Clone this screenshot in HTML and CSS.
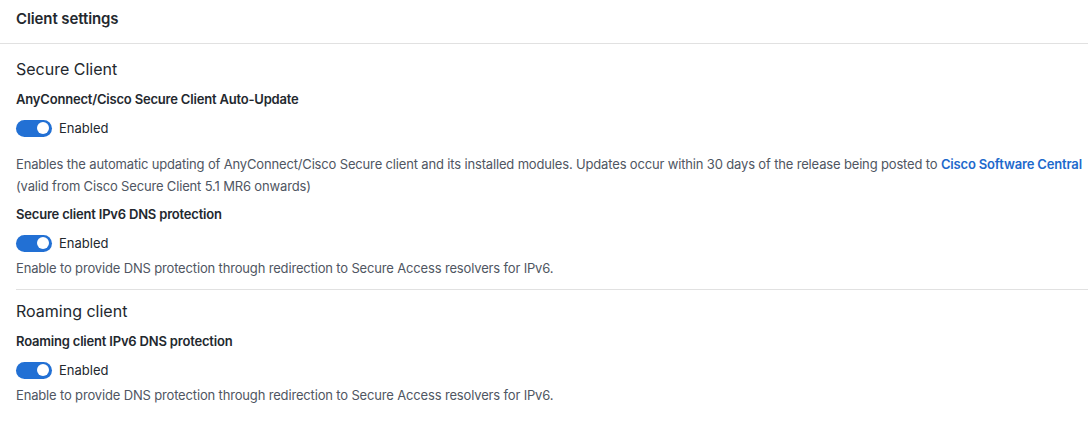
FILE: index.html
```html
<!DOCTYPE html>
<html>
<head>
<meta charset="utf-8">
<link rel="stylesheet" href="styles.css">
</head>
<body>
<div class="page">
  <div class="header">Client settings</div>
  <div class="body">
    <section class="section first">
      <h2 class="section-title">Secure Client</h2>
      <div class="setting">
        <div class="label">AnyConnect/Cisco Secure Client Auto-Update</div>
        <div class="toggle-row"><span class="toggle"><span class="knob"></span></span><span class="toggle-text">Enabled</span></div>
        <p class="desc extra">Enables the automatic updating of AnyConnect/Cisco Secure client and its installed modules. Updates occur within 30 days of the release being posted to <a class="link" href="#">Cisco Software Central</a><br>(valid from Cisco Secure Client 5.1 MR6 onwards)</p>
      </div>
      <div class="setting">
        <div class="label">Secure client IPv6 DNS protection</div>
        <div class="toggle-row"><span class="toggle"><span class="knob"></span></span><span class="toggle-text">Enabled</span></div>
        <p class="desc">Enable to provide DNS protection through redirection to Secure Access resolvers for IPv6.</p>
      </div>
    </section>
    <section class="section">
      <h2 class="section-title">Roaming client</h2>
      <div class="setting">
        <div class="label">Roaming client IPv6 DNS protection</div>
        <div class="toggle-row"><span class="toggle"><span class="knob"></span></span><span class="toggle-text">Enabled</span></div>
        <p class="desc">Enable to provide DNS protection through redirection to Secure Access resolvers for IPv6.</p>
      </div>
    </section>
  </div>
</div>
</body>
</html>
```
FILE: styles.css
```css
* { box-sizing: border-box; }
html, body { margin: 0; padding: 0; background: #fff; }
body {
  font-family: Inter, "Noto Sans", "Liberation Sans", sans-serif;
  color: #23282e;
  font-size: 13px;
}
.header {
  height: 44px;
  padding: 9px 16px 0;
  line-height: 20px;
  font-size: 15px;
  font-weight: 600;
  letter-spacing: -0.1px;
  border-bottom: 1px solid #e1e1e1;
}
.body { padding: 0 0 0 16px; }
.section { padding-top: 9px; }
.section.first { padding-top: 13px; }
.section + .section { border-top: 1px solid #e1e1e1; margin-top: 10px; }
.section-title {
  margin: 0;
  font-size: 16px;
  font-weight: 400;
  line-height: 24px;
}
.setting { margin-top: 8px; }
.setting + .setting { margin-top: 7px; }
.label {
  font-weight: 600;
  line-height: 20px;
  letter-spacing: -0.19px;
}
.toggle-row {
  margin-top: 7px;
  height: 24px;
  display: flex;
  align-items: center;
  gap: 7px;
}
.toggle {
  width: 36px;
  height: 17px;
  border-radius: 9px;
  background: #2270d4;
  display: flex;
  align-items: center;
  justify-content: flex-end;
  padding-right: 3px;
}
.knob {
  width: 12px;
  height: 12px;
  border-radius: 50%;
  background: #fff;
}
.toggle-text { line-height: 20px; }
.desc {
  margin: 2px 0 0;
  line-height: 22px;
  color: #4f5662;
  letter-spacing: -0.16px;
}
.desc.extra { margin-top: 13px; }
.link {
  color: #1d69cc;
  font-weight: 600;
  text-decoration: none;
}
```
